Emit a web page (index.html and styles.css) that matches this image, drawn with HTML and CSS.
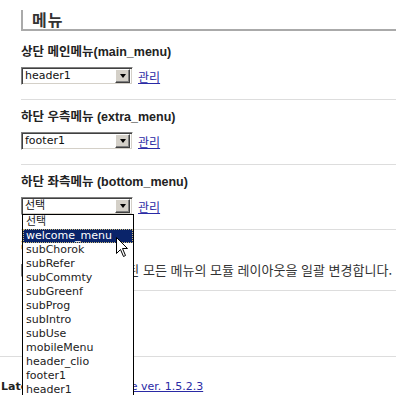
FILE: index.html
```html
<!DOCTYPE html>
<html lang="ko">
  <head>
    <meta charset="UTF-8" />
    <title>메뉴 설정</title>
    <link rel="stylesheet" href="styles.css">
  </head>
  <body>
    <div class="page">
      <h2 class="box-title">메뉴</h2>

      <div class="section">
        <h3 class="section-title">상단 메인메뉴(main_menu)</h3>
        <div class="row">
          <div class="select">
            <span class="select-value">header1</span>
            <span class="select-btn"><span class="arrow"></span></span>
          </div>
          <a href="#" class="manage">관리</a>
        </div>
      </div>

      <div class="section">
        <h3 class="section-title">하단 우측메뉴 (extra_menu)</h3>
        <div class="row">
          <div class="select">
            <span class="select-value">footer1</span>
            <span class="select-btn"><span class="arrow"></span></span>
          </div>
          <a href="#" class="manage">관리</a>
        </div>
      </div>

      <div class="section">
        <h3 class="section-title">하단 좌측메뉴 (bottom_menu)</h3>
        <div class="row">
          <div class="select select-open">
            <span class="select-value">선택</span>
            <span class="select-btn"><span class="arrow"></span></span>
            <!-- opened option list -->
            <ul class="options">
              <li>선택</li>
              <li class="active">welcome_menu</li>
              <li>subChorok</li>
              <li>subRefer</li>
              <li>subCommty</li>
              <li>subGreenf</li>
              <li>subProg</li>
              <li>subIntro</li>
              <li>subUse</li>
              <li>mobileMenu</li>
              <li>header_clio</li>
              <li>footer1</li>
              <li>header1</li>
            </ul>
          </div>
          <a href="#" class="manage">관리</a>
        </div>
      </div>

      <div class="section section-short">
        <h3 class="section-title">레이아웃</h3>
        <div class="row row-check">
          <span class="checkbox"></span>
          <span class="desc">체크하시면 선택된 모든 메뉴의 모듈 레이아웃을 일괄 변경합니다.</span>
        </div>
      </div>

      <div class="section-submit">
        <button class="btn">저장</button>
      </div>
    </div>

    <div class="footer">
      <strong>Latest</strong> <span class="sep">:</span> <a href="#">XpressEngine ver. 1.5.2.3</a>
    </div>

    <svg class="cursor" width="13" height="21" viewBox="0 0 13 21">
      <path d="M0.5 0.5 L0.5 16.5 L4.5 12.5 L7.5 19.5 L9.5 18.5 L6.5 11.5 L11.5 11.5 Z" fill="#fff" stroke="#000" stroke-width="1" />
    </svg>
  </body>
</html>
```

FILE: styles.css
```css
body {
  margin: 0;
  font-family: "DejaVu Sans", "Noto Sans CJK KR", sans-serif;
  font-size: 12px;
  color: #333;
  background-color: #fff;
}

.page {
  padding: 10px 0 0 21px;
}

.box-title {
  margin: 0 0 4px;
  height: 19px;
  line-height: 19px;
  padding-left: 9px;
  border-left: 2px solid #aaa;
  border-bottom: 2px solid #aaa;
  font-family: "Noto Sans CJK KR", sans-serif;
  font-size: 16px;
  font-weight: bold;
  letter-spacing: 1px;
  color: #333;
}

.section {
  padding: 9px 0 14px;
  border-bottom: 1px solid #ddd;
}

.section-short {
  padding-bottom: 12px;
}

.section-title {
  margin: 0 0 7px;
  line-height: 16px;
  font-family: "Liberation Sans", "Noto Sans CJK KR", sans-serif;
  font-size: 12.5px;
  font-weight: bold;
  color: #222;
}

.row {
  display: flex;
  align-items: center;
  gap: 5px;
}

.select {
  position: relative;
  display: flex;
  align-items: center;
  box-sizing: border-box;
  width: 112px;
  height: 18px;
  border-top: 1px solid #808080;
  border-left: 1px solid #808080;
  border-right: 1px solid #fff;
  border-bottom: 1px solid #fff;
  box-shadow: inset 1px 1px 0 #404040, inset -1px -1px 0 #d4d0c8;
  background-color: #fff;
}

.select-value {
  flex: 1;
  padding-left: 3px;
  font-size: 11px;
  line-height: 14px;
  color: #111;
}

.select-btn {
  display: flex;
  align-items: center;
  justify-content: center;
  box-sizing: border-box;
  width: 15px;
  height: 14px;
  margin-right: 2px;
  background-color: #d4d0c8;
  border-top: 1px solid #fff;
  border-left: 1px solid #fff;
  border-right: 1px solid #404040;
  border-bottom: 1px solid #404040;
  box-shadow: inset -1px -1px 0 #808080;
}

.arrow {
  width: 0;
  height: 0;
  border-left: 3.5px solid transparent;
  border-right: 3.5px solid transparent;
  border-top: 4px solid #000;
}

.manage {
  font-size: 12px;
  color: #2a2aa5;
}

.options {
  position: absolute;
  top: 16px;
  left: 0;
  z-index: 5;
  width: 110px;
  margin: 0;
  padding: 0;
  list-style: none;
  background-color: #fff;
  border: 1px solid #000;
}

.options li {
  height: 14px;
  line-height: 14px;
  padding-left: 3px;
  font-size: 11px;
  color: #222;
  white-space: nowrap;
}

.options li.active {
  background-color: #0a246a;
  color: #fff;
  outline: 1px dotted #c8b87a;
  outline-offset: -1px;
}

.row-check {
  gap: 6px;
  height: 16px;
}

.checkbox {
  box-sizing: border-box;
  width: 13px;
  height: 13px;
  border-top: 1px solid #808080;
  border-left: 1px solid #808080;
  border-right: 1px solid #fff;
  border-bottom: 1px solid #fff;
  box-shadow: inset 1px 1px 0 #404040, inset -1px -1px 0 #d4d0c8;
}

.desc {
  font-family: "Noto Sans CJK KR", sans-serif;
  font-size: 13px;
  line-height: 16px;
  color: #333;
  white-space: nowrap;
}

.section-submit {
  height: 65px;
  padding: 20px 0 0 8px;
  box-sizing: border-box;
}

.btn {
  font-family: inherit;
  font-size: 12px;
}

.footer {
  border-top: 1px solid #ddd;
  padding: 22px 0 0 1px;
  line-height: 16px;
  font-size: 11px;
  color: #333;
}

.footer strong {
  color: #222;
  font-size: 11px;
}

.footer .sep {
  margin: 0 6px;
}

.footer a {
  color: #2a2aa5;
}

.cursor {
  position: absolute;
  left: 116px;
  top: 237px;
  z-index: 10;
}
```
